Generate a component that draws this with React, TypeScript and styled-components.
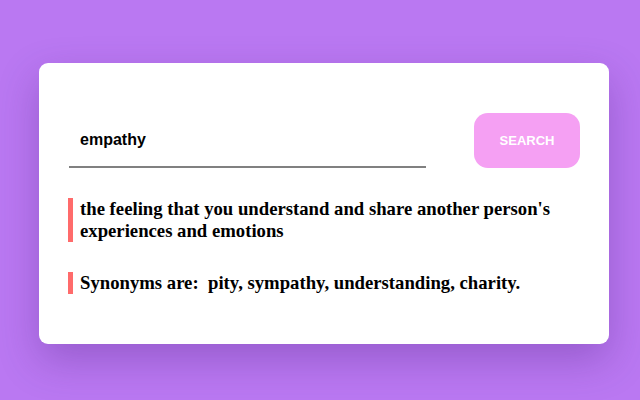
import React from "react";
import styled, { createGlobalStyle } from "styled-components";

const Global = createGlobalStyle`
  html, body { margin: 0; padding: 0; }
  body { background: #ba78f2; width: 640px; height: 400px; overflow: hidden; }
`;

const Page = styled.div`
  width: 640px;
  height: 400px;
  box-sizing: border-box;
  padding: 63px 31px 0 39px;
  background: #ba78f2;
`;

const Card = styled.div`
  box-sizing: border-box;
  height: 281px;
  background: #ffffff;
  border-radius: 9px;
  padding: 50px 29px 0 30px;
  box-shadow: 0 16px 40px rgba(70, 25, 120, 0.3);
`;

const SearchRow = styled.div`
  display: flex;
  align-items: flex-start;
  gap: 48px;
`;

const Input = styled.input`
  width: 357px;
  height: 55px;
  box-sizing: border-box;
  border: none;
  border-bottom: 2px solid #808080;
  outline: none;
  padding: 1px 0 0 11px;
  font-family: "Liberation Sans", Arial, sans-serif;
  font-weight: bold;
  font-size: 16px;
  color: #000;
  background: transparent;
`;

const Button = styled.button`
  width: 106px;
  height: 55px;
  border: none;
  border-radius: 14px;
  background: #f5a0f3;
  color: #ffffff;
  font-family: "Liberation Sans", Arial, sans-serif;
  font-weight: bold;
  font-size: 13px;
  cursor: pointer;
`;

const Result = styled.h3<{ $top: number }>`
  margin: ${(p) => p.$top}px 0 0 -1px;
  border-left: 5px solid #ff6b6b;
  padding-left: 7px;
  font-family: "Liberation Serif", "Times New Roman", serif;
  font-weight: bold;
  font-size: 18.72px;
  line-height: 22px;
  color: #000;
  white-space: pre-wrap;
`;

export default function App() {
  return (
    <>
      <Global />
      <Page>
        <Card>
          <SearchRow>
            <Input defaultValue="empathy" />
            <Button>SEARCH</Button>
          </SearchRow>
          <Result $top={30}>
            the feeling that you understand and share another person's experiences and emotions
          </Result>
          <Result $top={30}>Synonyms are:  pity, sympathy, understanding, charity.</Result>
        </Card>
      </Page>
    </>
  );
}
